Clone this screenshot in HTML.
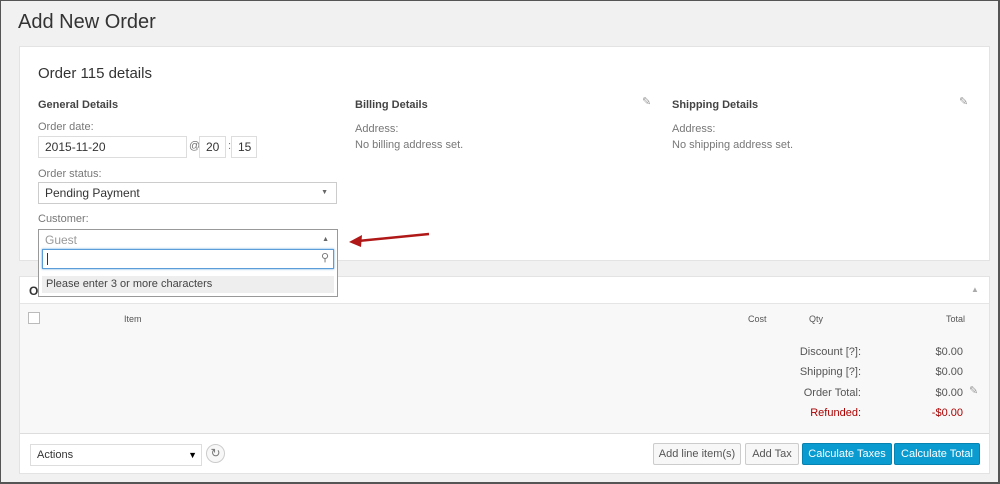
<!DOCTYPE html>
<html><head><style>
*{box-sizing:border-box;margin:0;padding:0}
body{width:1000px;height:484px;background:#f1f1f1;font-family:"Liberation Sans",sans-serif;color:#444;position:relative;overflow:hidden;border:1px solid #555;border-right-width:2px;border-bottom-width:2px}
.a{position:absolute}
.panel{position:absolute;background:#fff;border:1px solid #e3e3e3}
.lbl{font-size:11px;color:#777}
.h{font-size:11px;font-weight:bold;color:#444}
.inp{position:absolute;border:1px solid #ddd;background:#fff;font-size:12px;color:#333;padding-left:6px;line-height:20px}
.btn{position:absolute;height:22px;font-size:11px;line-height:20px;text-align:center;border-radius:2px}
.g{border:1px solid #ccc;background:#f7f7f7;color:#555}
.b{background:#0a9bd0;border:1px solid #0783b1;color:#fff}
.r{font-size:11px;text-align:right;color:#555}
.top{z-index:10}
</style></head><body>
<div class="a" style="left:17px;top:10px;font-size:20px;color:#333">Add New Order</div>
<div class="panel" style="left:18px;top:45px;width:971px;height:215px"></div>
<div class="a" style="left:37px;top:64px;font-size:15px;color:#333">Order 115 details</div>
<div class="a h" style="left:37px;top:98px">General Details</div>
<div class="a h" style="left:354px;top:98px">Billing Details</div>
<div class="a h" style="left:671px;top:98px">Shipping Details</div>
<div class="a" style="left:641px;top:94px;color:#999;font-size:11px">✎</div>
<div class="a" style="left:958px;top:94px;color:#999;font-size:11px">✎</div>
<div class="a lbl" style="left:354px;top:122px">Address:</div>
<div class="a lbl" style="left:354px;top:138px">No billing address set.</div>
<div class="a lbl" style="left:671px;top:122px">Address:</div>
<div class="a lbl" style="left:671px;top:138px">No shipping address set.</div>
<div class="a lbl" style="left:37px;top:120px">Order date:</div>
<div class="inp" style="left:37px;top:135px;width:149px;height:22px">2015-11-20</div>
<div class="a lbl" style="left:188px;top:139px">@</div>
<div class="inp" style="left:198px;top:135px;width:27px;height:22px">20</div>
<div class="a lbl" style="left:227px;top:139px">:</div>
<div class="inp" style="left:230px;top:135px;width:26px;height:22px">15</div>
<div class="a lbl" style="left:37px;top:167px">Order status:</div>
<div class="inp" style="left:37px;top:181px;width:299px;height:22px;border-color:#ccc">Pending Payment<span style="position:absolute;right:8px;top:0;font-size:7px;color:#666">▼</span></div>
<div class="a lbl" style="left:37px;top:212px">Customer:</div>
<svg class="a" style="left:345px;top:228px" width="85" height="20"><path d="M83 5 L12 12" stroke="#b01818" stroke-width="2.5"/><path d="M3 13 L16 6 L15 18 Z" fill="#b01818"/></svg>
<div class="panel" style="left:18px;top:275px;width:971px;height:198px;background:#f8f8f8"></div>
<div class="a" style="left:19px;top:276px;width:969px;height:27px;background:#fff;border-bottom:1px solid #e5e5e5"></div>
<div class="a" style="left:28px;top:283px;font-size:12px;font-weight:bold;color:#333">O</div>
<div class="a" style="left:970px;top:284px;font-size:8px;color:#aaa">▲</div>
<div class="inp top" style="left:37px;top:228px;width:300px;height:68px;border-color:#999;color:#999">Guest<span style="position:absolute;right:8px;top:0;font-size:7px;color:#666">▲</span></div>
<div class="a top" style="left:41px;top:248px;width:292px;height:20px;border:1px solid #5b9dd9;background:#fff;box-shadow:0 0 2px #5b9dd9"><div class="a" style="left:4px;top:3px;width:1px;height:12px;background:#333"></div><span class="a" style="right:4px;top:1px;font-size:11px;color:#777">⚲</span></div>
<div class="a top" style="left:41px;top:275px;width:292px;height:17px;background:#eee;font-size:11px;color:#444;padding-left:4px;line-height:17px">Please enter 3 or more characters</div>
<div class="a" style="left:27px;top:311px;width:12px;height:12px;border:1px solid #bbb;background:#fff"></div>
<div class="a" style="left:123px;top:313px;font-size:9px;color:#555">Item</div>
<div class="a" style="left:747px;top:313px;font-size:9px;color:#555">Cost</div>
<div class="a" style="left:808px;top:313px;font-size:9px;color:#555">Qty</div>
<div class="a" style="left:945px;top:313px;font-size:9px;color:#555">Total</div>
<div class="a r" style="left:760px;top:345px;width:100px">Discount [?]:</div>
<div class="a r" style="left:760px;top:365px;width:100px">Shipping [?]:</div>
<div class="a r" style="left:760px;top:386px;width:100px">Order Total:</div>
<div class="a r" style="left:760px;top:406px;width:100px;color:#a00">Refunded:</div>
<div class="a r" style="left:900px;top:345px;width:62px">$0.00</div>
<div class="a r" style="left:900px;top:365px;width:62px">$0.00</div>
<div class="a r" style="left:900px;top:386px;width:62px">$0.00</div>
<div class="a r" style="left:900px;top:406px;width:62px;color:#a00">-$0.00</div>
<div class="a" style="left:968px;top:383px;color:#999;font-size:11px">✎</div>
<div class="a" style="left:19px;top:432px;width:969px;height:40px;background:#fff;border-top:1px solid #ddd"></div>
<div class="inp" style="left:29px;top:443px;width:172px;height:22px;font-size:11px;color:#333">Actions<span style="position:absolute;right:4px;top:0;font-size:9px;color:#000">▼</span></div>
<div class="a" style="left:205px;top:443px;width:19px;height:19px;border:1px solid #ccc;border-radius:50%;background:#f7f7f7;text-align:center;font-size:12px;line-height:16px;color:#777">↻</div>
<div class="btn g" style="left:652px;top:442px;width:88px">Add line item(s)</div>
<div class="btn g" style="left:744px;top:442px;width:54px">Add Tax</div>
<div class="btn b" style="left:801px;top:442px;width:90px">Calculate Taxes</div>
<div class="btn b" style="left:893px;top:442px;width:86px">Calculate Total</div>
</body></html>
